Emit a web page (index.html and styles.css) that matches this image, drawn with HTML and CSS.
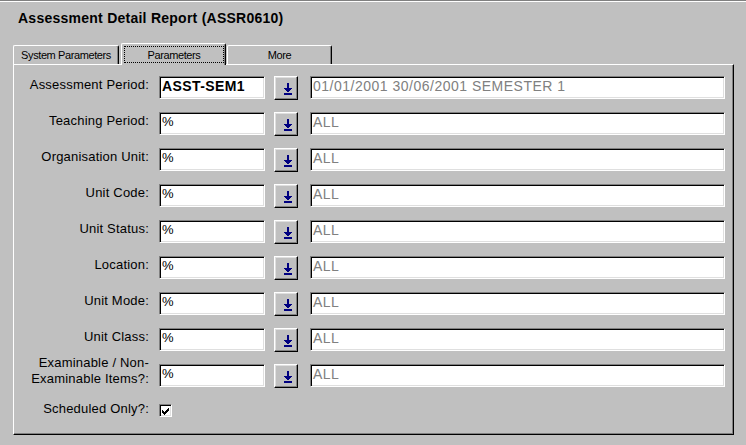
FILE: index.html
```
<!DOCTYPE html>
<html>
<head>
<meta charset="utf-8">
<title>Assessment Detail Report</title>
<link rel="stylesheet" href="styles.css">
</head>
<body>
<div class="window">
  <div class="title">Assessment Detail Report (ASSR0610)</div>
  <div class="tabs">
    <div class="tab tab-first">System Parameters</div>
    <div class="tab tab-active"><span class="focus">Parameters</span></div>
    <div class="tab tab-last">More</div>
  </div>
  <div class="panel">
    <div class="row">
      <div class="label">Assessment Period:</div>
      <div class="field code strong">ASST-SEM1</div>
      <div class="btn"><svg class="arrow" width="8" height="12" viewBox="0 0 8 12" shape-rendering="crispEdges"><rect x="3" y="0" width="2" height="5" fill="#000080"/><rect x="0" y="5" width="8" height="1" fill="#000080"/><rect x="1" y="6" width="6" height="1" fill="#000080"/><rect x="2" y="7" width="4" height="1" fill="#000080"/><rect x="3" y="8" width="2" height="1" fill="#000080"/><rect x="0" y="10" width="8" height="2" fill="#000080"/></svg></div>
      <div class="field desc">01/01/2001 30/06/2001 SEMESTER 1</div>
    </div>
    <div class="row">
      <div class="label">Teaching Period:</div>
      <div class="field code">%</div>
      <div class="btn"><svg class="arrow" width="8" height="12" viewBox="0 0 8 12" shape-rendering="crispEdges"><rect x="3" y="0" width="2" height="5" fill="#000080"/><rect x="0" y="5" width="8" height="1" fill="#000080"/><rect x="1" y="6" width="6" height="1" fill="#000080"/><rect x="2" y="7" width="4" height="1" fill="#000080"/><rect x="3" y="8" width="2" height="1" fill="#000080"/><rect x="0" y="10" width="8" height="2" fill="#000080"/></svg></div>
      <div class="field desc">ALL</div>
    </div>
    <div class="row">
      <div class="label">Organisation Unit:</div>
      <div class="field code">%</div>
      <div class="btn"><svg class="arrow" width="8" height="12" viewBox="0 0 8 12" shape-rendering="crispEdges"><rect x="3" y="0" width="2" height="5" fill="#000080"/><rect x="0" y="5" width="8" height="1" fill="#000080"/><rect x="1" y="6" width="6" height="1" fill="#000080"/><rect x="2" y="7" width="4" height="1" fill="#000080"/><rect x="3" y="8" width="2" height="1" fill="#000080"/><rect x="0" y="10" width="8" height="2" fill="#000080"/></svg></div>
      <div class="field desc">ALL</div>
    </div>
    <div class="row">
      <div class="label">Unit Code:</div>
      <div class="field code">%</div>
      <div class="btn"><svg class="arrow" width="8" height="12" viewBox="0 0 8 12" shape-rendering="crispEdges"><rect x="3" y="0" width="2" height="5" fill="#000080"/><rect x="0" y="5" width="8" height="1" fill="#000080"/><rect x="1" y="6" width="6" height="1" fill="#000080"/><rect x="2" y="7" width="4" height="1" fill="#000080"/><rect x="3" y="8" width="2" height="1" fill="#000080"/><rect x="0" y="10" width="8" height="2" fill="#000080"/></svg></div>
      <div class="field desc">ALL</div>
    </div>
    <div class="row">
      <div class="label">Unit Status:</div>
      <div class="field code">%</div>
      <div class="btn"><svg class="arrow" width="8" height="12" viewBox="0 0 8 12" shape-rendering="crispEdges"><rect x="3" y="0" width="2" height="5" fill="#000080"/><rect x="0" y="5" width="8" height="1" fill="#000080"/><rect x="1" y="6" width="6" height="1" fill="#000080"/><rect x="2" y="7" width="4" height="1" fill="#000080"/><rect x="3" y="8" width="2" height="1" fill="#000080"/><rect x="0" y="10" width="8" height="2" fill="#000080"/></svg></div>
      <div class="field desc">ALL</div>
    </div>
    <div class="row">
      <div class="label">Location:</div>
      <div class="field code">%</div>
      <div class="btn"><svg class="arrow" width="8" height="12" viewBox="0 0 8 12" shape-rendering="crispEdges"><rect x="3" y="0" width="2" height="5" fill="#000080"/><rect x="0" y="5" width="8" height="1" fill="#000080"/><rect x="1" y="6" width="6" height="1" fill="#000080"/><rect x="2" y="7" width="4" height="1" fill="#000080"/><rect x="3" y="8" width="2" height="1" fill="#000080"/><rect x="0" y="10" width="8" height="2" fill="#000080"/></svg></div>
      <div class="field desc">ALL</div>
    </div>
    <div class="row">
      <div class="label">Unit Mode:</div>
      <div class="field code">%</div>
      <div class="btn"><svg class="arrow" width="8" height="12" viewBox="0 0 8 12" shape-rendering="crispEdges"><rect x="3" y="0" width="2" height="5" fill="#000080"/><rect x="0" y="5" width="8" height="1" fill="#000080"/><rect x="1" y="6" width="6" height="1" fill="#000080"/><rect x="2" y="7" width="4" height="1" fill="#000080"/><rect x="3" y="8" width="2" height="1" fill="#000080"/><rect x="0" y="10" width="8" height="2" fill="#000080"/></svg></div>
      <div class="field desc">ALL</div>
    </div>
    <div class="row">
      <div class="label">Unit Class:</div>
      <div class="field code">%</div>
      <div class="btn"><svg class="arrow" width="8" height="12" viewBox="0 0 8 12" shape-rendering="crispEdges"><rect x="3" y="0" width="2" height="5" fill="#000080"/><rect x="0" y="5" width="8" height="1" fill="#000080"/><rect x="1" y="6" width="6" height="1" fill="#000080"/><rect x="2" y="7" width="4" height="1" fill="#000080"/><rect x="3" y="8" width="2" height="1" fill="#000080"/><rect x="0" y="10" width="8" height="2" fill="#000080"/></svg></div>
      <div class="field desc">ALL</div>
    </div>
    <div class="row">
      <div class="label label-two">Examinable / Non-<br>Examinable Items?:</div>
      <div class="field code">%</div>
      <div class="btn"><svg class="arrow" width="8" height="12" viewBox="0 0 8 12" shape-rendering="crispEdges"><rect x="3" y="0" width="2" height="5" fill="#000080"/><rect x="0" y="5" width="8" height="1" fill="#000080"/><rect x="1" y="6" width="6" height="1" fill="#000080"/><rect x="2" y="7" width="4" height="1" fill="#000080"/><rect x="3" y="8" width="2" height="1" fill="#000080"/><rect x="0" y="10" width="8" height="2" fill="#000080"/></svg></div>
      <div class="field desc">ALL</div>
    </div>
    <div class="row">
      <div class="label">Scheduled Only?:</div>
      <div class="check"><svg width="7" height="7" viewBox="0 0 7 7" shape-rendering="crispEdges"><rect x="6" y="0" width="1" height="1" fill="#000"/><rect x="5" y="1" width="2" height="1" fill="#000"/><rect x="0" y="2" width="1" height="1" fill="#000"/><rect x="4" y="2" width="3" height="1" fill="#000"/><rect x="0" y="3" width="2" height="1" fill="#000"/><rect x="3" y="3" width="3" height="1" fill="#000"/><rect x="0" y="4" width="5" height="1" fill="#000"/><rect x="1" y="5" width="3" height="1" fill="#000"/><rect x="2" y="6" width="1" height="1" fill="#000"/></svg></div>
    </div>
  </div>
</div>
</body>
</html>
```
FILE: styles.css
```
html, body {
  margin: 0;
  padding: 0;
}
body {
  background: #c0c0c0;
  width: 746px;
  height: 445px;
  overflow: hidden;
  font-family: "Liberation Sans", Arial, sans-serif;
  color: #000;
}
.window {
  height: 445px;
  box-sizing: border-box;
  border-top: 1px solid #808080;
  box-shadow: inset 0 1px 0 #ffffff;
}
.title {
  font-weight: bold;
  font-size: 14px;
  letter-spacing: 0.25px;
  line-height: 16px;
  padding: 9px 0 0 18px;
  height: 16px;
}
.tabs {
  display: flex;
  align-items: flex-end;
  margin-top: 17px;
  padding-left: 13px;
  height: 21px;
  position: relative;
  z-index: 1;
}
.tab {
  box-sizing: border-box;
  width: 105px;
  height: 19px;
  background: #c0c0c0;
  border-top: 1px solid #ffffff;
  border-left: 1px solid #ffffff;
  border-right: 1px solid #000000;
  border-radius: 2px 2px 0 0;
  box-shadow: inset -1px 0 0 #808080;
  font-size: 11px;
  letter-spacing: -0.4px;
  line-height: 13px;
  text-align: center;
  padding-top: 3px;
}
.tab-first {
  width: 106px;
}
.tab-active {
  margin-left: 2px;
  height: 22px;
  margin-bottom: -1px;
  padding-top: 0;
}
.focus {
  display: block;
  margin: 2px 1px 0 2px;
  border: 1px dotted #000;
  padding-top: 2px;
  line-height: 13px;
  height: 13px;
}
.tab-last {
  margin-left: 1px;
}
.panel {
  box-sizing: border-box;
  margin-left: 13px;
  width: 721px;
  height: 371px;
  border-top: 1px solid #ffffff;
  border-left: 1px solid #ffffff;
  border-right: 1px solid #000000;
  border-bottom: 1px solid #000000;
  box-shadow: inset -1px -1px 0 #808080;
  padding-top: 11px;
}
.row {
  display: flex;
  align-items: flex-start;
  height: 23px;
  margin-bottom: 13px;
}
.label {
  width: 135px;
  text-align: right;
  font-size: 13px;
  letter-spacing: 0.2px;
  line-height: 16px;
  padding-top: 1px;
  white-space: nowrap;
}
.label-two {
  margin-top: -9px;
  padding-top: 0;
}
.field {
  box-sizing: border-box;
  height: 23px;
  background: #ffffff;
  border: 1px solid;
  border-color: #808080 #ffffff #ffffff #808080;
  box-shadow: inset 1px 1px 0 #000000, inset -1px -1px 0 #dfdfdf;
  padding: 1px 0 0 2px;
  font-size: 13px;
  line-height: 16px;
  white-space: nowrap;
  overflow: hidden;
}
.code {
  width: 106px;
  margin-left: 10px;
}
.strong {
  font-weight: bold;
  font-size: 14px;
  letter-spacing: 0.4px;
}
.desc {
  width: 415px;
  margin-left: 12px;
  color: #808080;
  font-size: 14px;
  letter-spacing: 0.5px;
}
.btn {
  box-sizing: border-box;
  width: 24px;
  height: 24px;
  margin-left: 9px;
  background: #c0c0c0;
  border: 1px solid;
  border-color: #ffffff #000000 #000000 #ffffff;
  box-shadow: inset -1px -1px 0 #808080, inset 1px 1px 0 #dfdfdf;
  padding: 6px 0 0 9px;
}
.arrow {
  display: block;
}
.check {
  box-sizing: border-box;
  width: 13px;
  height: 13px;
  margin: 4px 0 0 10px;
  background: #ffffff;
  border: 1px solid;
  border-color: #808080 #ffffff #ffffff #808080;
  box-shadow: inset 1px 1px 0 #000000, inset -1px -1px 0 #dfdfdf;
  padding: 3px 0 0 2px;
}
.check svg {
  display: block;
}
```
